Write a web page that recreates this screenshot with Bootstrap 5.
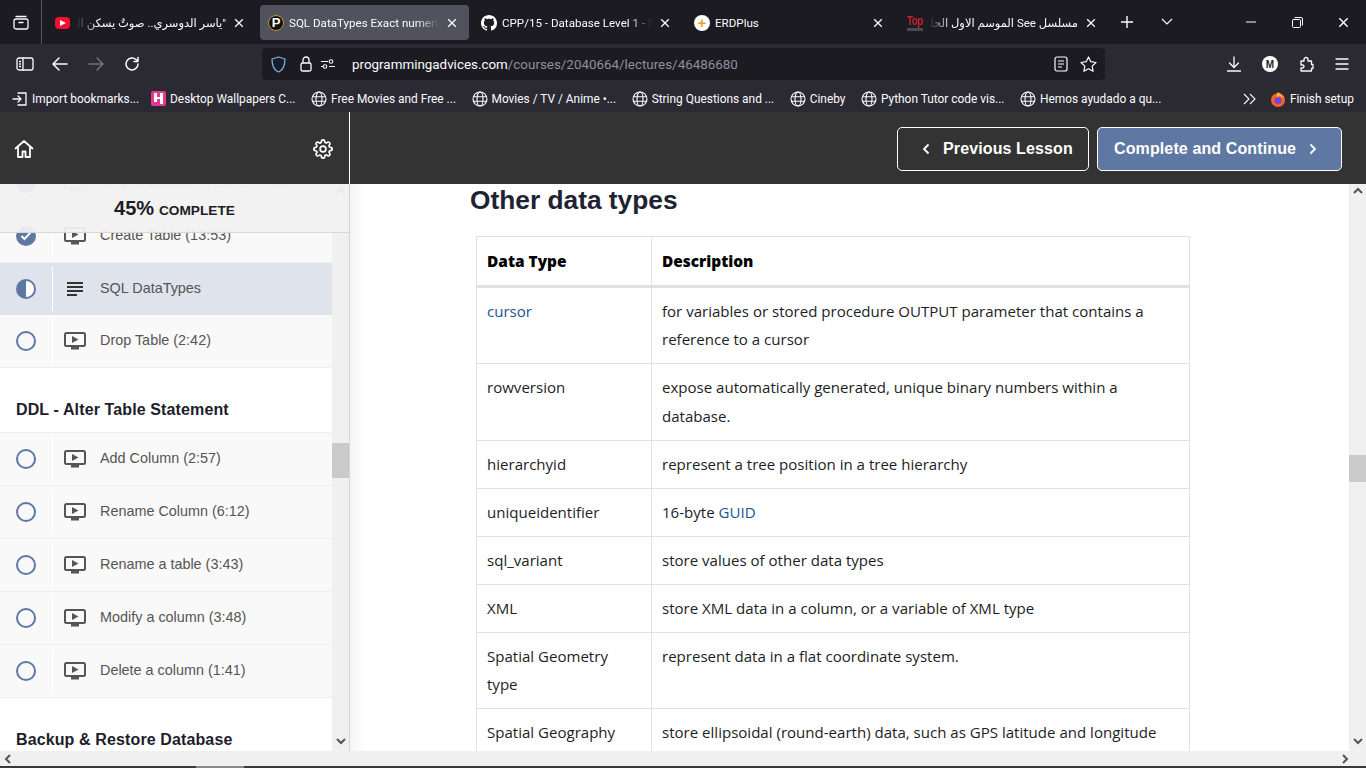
<!DOCTYPE html>
<html lang="en">
<head>
  <meta charset="UTF-8">
  <title>SQL DataTypes</title>
  <link rel="stylesheet" href="https://cdn.jsdelivr.net/npm/bootstrap@5.3.3/dist/css/bootstrap.min.css">
  <style>
    html, body { height: 100%; overflow: hidden; }
    body { font-family: "Liberation Sans", Arial, sans-serif; background: #fff; }
    svg { display: block; flex: none; }
    .ic { fill: none; stroke: currentColor; stroke-linecap: round; stroke-linejoin: round; }
    .shell { height: 768px; }

    /* browser chrome */
    .tabstrip { height: 44px; background: #1c1b22; color: #fbfbfe; font: 11.6px Roboto, "DejaVu Sans", sans-serif; }
    .strip-btn { width: 42px; height: 44px; border-right: 1px solid #55545c; }
    .tabitem { width: 209px; height: 35px; margin-right: 4px; padding: 0 12px 0 8px; border-radius: 4px; }
    .tabitem.on { background: #52525e; }
    .tabs-wrap { padding-left: 5px; padding-top: 1px; }
    .tabname { flex: 1; min-width: 0; margin-left: 5px; white-space: nowrap; overflow: hidden; -webkit-mask-image: linear-gradient(to right, #000 85%, transparent); mask-image: linear-gradient(to right, #000 85%, transparent); }
    .tabname.rtl { direction: rtl; font-size: 11.5px; margin-left: 6px; -webkit-mask-image: linear-gradient(to left, #000 85%, transparent); mask-image: linear-gradient(to left, #000 85%, transparent); }
    .tabname.plain { -webkit-mask-image: none; mask-image: none; }
    .fav { width: 16px; height: 16px; flex: none; }
    .fav-yt { background: #f5102f; border-radius: 4px; width: 15px; height: 12px; }
    .fav-p { background: #111; border: 1px solid #b99a2e; border-radius: 50%; color: #fff; font: 700 13px/14px "Liberation Sans", sans-serif; text-align: center; }
    .fav-erd { background: #fff; border-radius: 50%; color: #f0a020; font: 700 15px/15px "Liberation Sans", sans-serif; text-align: center; }
    .fav-top { color: #c8202c; font: 700 10px/10px "Liberation Sans", sans-serif; text-align: center; letter-spacing: -.6px; }
    .fav-top span { display: block; transform: scaleY(1.25); transform-origin: top; margin-bottom: 3px; }
    .fav-top i { display: block; height: 3px; background: #4a4a50; }
    .tab-plus { margin-left: 8px; }
    .tab-more { margin-left: 27px; }
    .win-btn { width: 46px; }

    .toolbar { height: 40px; background: #2b2a33; color: #fbfbfe; padding-left: 16px; }
    .tool-slot { width: 36px; }
    .urlbar { width: 843px; height: 32px; margin-left: 102px; background: #1c1b22; border-radius: 4px; padding: 0 8px 0 9px; font: 13.4px Roboto, sans-serif; }
    .urlhost { color: #fbfbfe; }
    .urlpath { color: #8f8f9d; }
    .url-lock { margin-left: 14px; }
    .url-tune { margin-left: 9px; }
    .url-text { margin: 1px 0 0 17px; }
    .url-star { margin-left: 12px; }
    .tool-right { gap: 20px; padding-right: 16px; }
    .fav-m { width: 16px; height: 16px; font: 700 10px "Liberation Sans", sans-serif; }

    .bookbar { height: 28px; background: #2b2a33; color: #fbfbfe; font: 11.9px Roboto, sans-serif; padding: 1px 12px 0; white-space: nowrap; }
    .bookitem { margin-right: 15.5px; gap: 4px; }
    .bookitem.first { margin-right: 12px; }
    .book-more { margin-right: 14px; }
    .book-end { gap: 4px; }

    /* course player */
    .player { flex: 1; min-height: 0; }
    .sidepanel { width: 350px; border-right: 1px solid #d4d4d4; }
    .sidehead { height: 72px; background: #333; color: #fff; padding: 2px 16px 0 14px; border-right: 1px solid #fff; margin-right: -1px; }
    .sidebody { flex: 1; min-height: 0; overflow: hidden; position: relative; background: #fff; }
    .progress-box { position: absolute; left: 0; right: 0; top: 0; height: 49px; background: rgba(241, 241, 241, .94); border-bottom: 1px solid #d8d8d8; color: #1d1d25; font-weight: 700; font-size: 13.7px; z-index: 2; }
    .progress-box b { font-size: 20px; margin-right: 1px; }
    .lesson-col { width: 332px; margin-top: -27px; }
    .lesson { height: 53px; padding: 0; background: #f9f9f9; border: 0; border-bottom: 1px solid #eee; color: #555; font-size: 14.4px; }
    .lesson.now { height: 52px; background: #dfe3ec; border-bottom: 0; }
    .lesson.ghost { color: #aaa; }
    .lesson-state { width: 53px; height: 44px; padding-left: 16px; border-right: 1px solid #fff; }
    .lesson-kind { width: 47px; padding-left: 11px; }
    .ring { width: 20px; height: 20px; border: 2px solid #5f77a3; border-radius: 50%; }
    .ring.half { background: linear-gradient(to right, #5f77a3 50%, #fff 50%); }
    .ring.done { background: #5f77a3; }
    .section-name { height: 65px; padding: 28px 16px 0; font-weight: 700; font-size: 16px; letter-spacing: .12px; line-height: 27px; color: #1d1d2b; border-bottom: 1px solid #eee; background: #fff; }
    .sb-track { width: 17px; background: #f0f0f0; color: #555; padding: 3px 0 2px; }
    .sidebody .sb-track { position: absolute; right: 0; top: 0; bottom: 0; }
    .sb-thumb { width: 17px; background: #cacaca; }
    .sb-thumb.left { height: 35px; margin-top: 248px; }
    .sb-thumb.right { height: 27px; margin-top: 260px; }

    .mainpanel { flex: 1; min-width: 0; }
    .mainhead { height: 72px; background: #333; padding: 2px 24px 0 0; gap: 8px; }
    .nav-btn { height: 44px; border: 1px solid #fff; border-radius: 5px; color: #fff; font-weight: 700; font-size: 16px; letter-spacing: .12px; gap: 13px; padding: 0 0 0 16px; }
    .nav-btn:hover { color: #fff; }
    .nav-prev { width: 192px; background: #333; padding-left: 24px; }
    .nav-next { width: 245px; background: #5f77a3; }
    .mainbody { flex: 1; min-height: 0; }
    .lecture { flex: 1; min-width: 0; overflow: hidden; padding-left: 120px; background: linear-gradient(to right, #f4f4f4, #fff 14px); }
    .lecture h2 { font-size: 26.3px; font-weight: 700; line-height: 32px; margin: 0; color: #1f2233; }
    .datatable { width: 714px; margin: 20px 0 0 6px; table-layout: fixed; font: 15.05px/28.5px "Open Sans", "Noto Sans", sans-serif; color: #1d1d25; }
    .datatable th, .datatable td { padding: 9.25px 10px; border-color: #dee2e6; color: #1d1d25; }
    .datatable thead th { font-size: 15.4px; font-weight: 800; color: #000; padding: 10.5px 10px 8.5px; border-bottom: 3px solid #dee2e6; }
    .datatable a { color: #1a5590; text-decoration: none; }
    .col-type { width: 175px; }

    .hbar { height: 15px; background: #f0f0f0; color: #555; padding: 0 17px 0 4px; }
    .footline { height: 2px; background: #3a3a3a; }
    .footline i { display: block; width: 48px; height: 2px; margin-left: 196px; background: #8a8a8a; }
  </style>
</head>
<body>
<svg width="0" height="0" class="position-absolute">
  <symbol id="monitor" viewBox="0 0 22 18"><rect x="1" y="1" width="20" height="13" rx="1.5" fill="none" stroke="currentColor" stroke-width="2"/><path d="M8 4l6.5 3.5L8 11z" fill="currentColor"/><rect x="7" y="15" width="8" height="2.5" fill="currentColor"/></symbol>
  <symbol id="globe" viewBox="0 0 16 16"><g fill="none" stroke="currentColor" stroke-width="1.1"><circle cx="8" cy="8" r="7"/><ellipse cx="8" cy="8" rx="3" ry="7"/><path d="M1.3 5.800h13.400M1.300 10.200h13.400"/></g></symbol>
  <symbol id="closex" viewBox="0 0 10 10"><path d="M1.200 1.200l7.600 7.600M8.800 1.200L1.200 8.800" stroke="currentColor" stroke-width="1.300" fill="none"/></symbol>
  <symbol id="chev-up" viewBox="0 0 10 8"><path d="M1 6l4-4 4 4" fill="none" stroke="currentColor" stroke-width="2"/></symbol>
  <symbol id="chev-down" viewBox="0 0 10 8"><path d="M1 2l4 4 4-4" fill="none" stroke="currentColor" stroke-width="2"/></symbol>
  <symbol id="chev-left" viewBox="0 0 8 10"><path d="M6 1L2 5l4 4" fill="none" stroke="currentColor" stroke-width="2"/></symbol>
  <symbol id="chev-right" viewBox="0 0 8 10"><path d="M2 1l4 4-4 4" fill="none" stroke="currentColor" stroke-width="2"/></symbol>
</svg>

<div class="shell d-flex flex-column">
  <!-- tabs -->
  <div class="tabstrip d-flex align-items-center">
    <div class="strip-btn d-flex align-items-center justify-content-center">
      <svg width="16" height="16" viewBox="0 0 16 16" class="ic" stroke-width="1.300"><rect x="1" y="5" width="14" height="10" rx="2"/><path d="M3 2.500h10M6 8.500h4"/></svg>
    </div>
    <div class="tabs-wrap d-flex align-items-center">
      <div class="tabitem d-flex align-items-center">
        <div class="fav fav-yt d-flex align-items-center justify-content-center"><svg width="6" height="6" viewBox="0 0 6 6"><path d="M0 0l6 3-6 3z" fill="#fff"/></svg></div>
        <div class="tabname rtl" dir="rtl">"ياسر الدوسري.. صوتٌ يسكن الروح والوجدان</div>
        <svg class="ms-2" width="10" height="10"><use href="#closex"/></svg>
      </div>
      <div class="tabitem on d-flex align-items-center">
        <div class="fav fav-p">P</div>
        <div class="tabname">SQL DataTypes Exact numerics and more</div>
        <svg class="ms-2" width="10" height="10"><use href="#closex"/></svg>
      </div>
      <div class="tabitem d-flex align-items-center">
        <svg class="fav" viewBox="0 0 16 16"><path fill="#fff" d="M8 0C3.58 0 0 3.58 0 8c0 3.54 2.29 6.53 5.47 7.59.4.07.55-.17.55-.38 0-.19-.01-.82-.01-1.49-2.01.37-2.53-.49-2.69-.94-.09-.23-.48-.94-.82-1.13-.28-.15-.68-.52-.01-.53.63-.01 1.08.58 1.23.82.72 1.21 1.87.87 2.33.66.07-.52.28-.87.51-1.07-1.78-.2-3.64-.89-3.64-3.95 0-.87.31-1.59.82-2.15-.08-.2-.36-1.02.08-2.12 0 0 .67-.21 2.2.82.64-.18 1.32-.27 2-.27.68 0 1.36.09 2 .27 1.53-1.04 2.2-.82 2.2-.82.44 1.1.16 1.92.08 2.12.51.56.82 1.27.82 2.15 0 3.07-1.87 3.75-3.65 3.95.29.25.54.73.54 1.48 0 1.07-.01 1.93-.01 2.2 0 .21.15.46.55.38A8.012 8.012 0 0 0 16 8c0-4.42-3.58-8-8-8z"/></svg>
        <div class="tabname">CPP/15 - Database Level 1 - SQL Server</div>
        <svg class="ms-2" width="10" height="10"><use href="#closex"/></svg>
      </div>
      <div class="tabitem d-flex align-items-center">
        <div class="fav fav-erd">+</div>
        <div class="tabname plain">ERDPlus</div>
        <svg class="ms-2" width="10" height="10"><use href="#closex"/></svg>
      </div>
      <div class="tabitem d-flex align-items-center">
        <div class="fav fav-top"><span>Top</span><i></i></div>
        <div class="tabname rtl" dir="rtl">مسلسل See الموسم الاول الحلقة الاولى</div>
        <svg class="ms-2" width="10" height="10"><use href="#closex"/></svg>
      </div>
    </div>
    <svg class="tab-plus" width="14" height="14" viewBox="0 0 14 14"><path d="M7 1v12M1 7h12" stroke="#fbfbfe" stroke-width="1.400"/></svg>
    <svg class="tab-more" width="12" height="8" viewBox="0 0 12 8"><path d="M1 1l5 5 5-5" fill="none" stroke="#fbfbfe" stroke-width="1.200"/></svg>
    <div class="ms-auto d-flex align-items-center">
      <div class="win-btn d-flex justify-content-center"><svg width="10" height="2" viewBox="0 0 10 2"><path d="M0 1h10" stroke="#fbfbfe"/></svg></div>
      <div class="win-btn d-flex justify-content-center"><svg width="11" height="11" viewBox="0 0 11 11" class="ic" stroke-width="1"><rect x=".5" y="2.500" width="8" height="8" rx="1"/><path d="M3 .5h6a1.500 1.500 0 0 1 1.500 1.500v6"/></svg></div>
      <div class="win-btn d-flex justify-content-center"><svg width="11" height="11"><use href="#closex"/></svg></div>
    </div>
  </div>

  <!-- toolbar -->
  <div class="toolbar d-flex align-items-center">
    <div class="tool-slot"><svg width="18" height="14" viewBox="0 0 18 14" class="ic" stroke-width="1.300"><rect x="1" y="1" width="16" height="12" rx="2"/><path d="M7 1v12M3.500 4.500h1M3.500 7h1M3.500 9.500h1"/></svg></div>
    <div class="tool-slot"><svg width="16" height="14" viewBox="0 0 16 14" class="ic" stroke-width="1.500"><path d="M15 7H1M7 1L1 7l6 6"/></svg></div>
    <div class="tool-slot text-secondary"><svg width="16" height="14" viewBox="0 0 16 14" class="ic" stroke-width="1.500"><path d="M1 7h14M9 1l6 6-6 6"/></svg></div>
    <div class="tool-slot"><svg width="16" height="16" viewBox="0 0 16 16" class="ic" stroke-width="1.500"><path d="M14 8a6 6 0 1 1-2-4.500L14 5.500M14 1.500v4h-4"/></svg></div>
    <div class="urlbar d-flex align-items-center">
      <svg width="15" height="17" viewBox="0 0 15 17"><path d="M7.500 1L14 3c0 6-1 10.500-6.500 13C2 13.500 1 9 1 3z" fill="none" stroke="#6db5e8" stroke-width="1.300" stroke-linejoin="round"/></svg>
      <svg class="url-lock" width="12" height="16" viewBox="0 0 12 16"><rect x="1" y="7" width="10" height="8" rx="1.500" fill="none" stroke="#fbfbfe" stroke-width="1.300"/><path d="M3 7V4a3 3 0 0 1 6 0v3" fill="none" stroke="#fbfbfe" stroke-width="1.300"/></svg>
      <svg class="url-tune" width="14" height="12" viewBox="0 0 14 12"><g fill="none" stroke="#fbfbfe" stroke-width="1.100"><path d="M0 3.500h7M0 8.500h2M8 8.500h6"/><circle cx="10" cy="3.500" r="1.800"/><circle cx="4" cy="8.500" r="1.800"/></g></svg>
      <span class="url-text"><span class="urlhost">programmingadvices.com</span><span class="urlpath">/courses/2040664/lectures/46486680</span></span>
      <svg class="ms-auto" width="14" height="16" viewBox="0 0 14 16"><g fill="none" stroke="#fbfbfe" stroke-width="1.200"><rect x="1" y="1" width="12" height="14" rx="2"/><path d="M4 5h6M4 8h6M4 11h4"/></g></svg>
      <svg class="url-star" width="17" height="16" viewBox="0 0 17 16"><path d="M8.500 1l2.300 4.700 5.200.8-3.800 3.600.9 5.200-4.600-2.500-4.600 2.500.9-5.200L1 6.500l5.200-.8z" fill="none" stroke="#fbfbfe" stroke-width="1.200" stroke-linejoin="round"/></svg>
    </div>
    <div class="tool-right ms-auto d-flex align-items-center">
      <svg width="16" height="16" viewBox="0 0 16 16" class="ic" stroke-width="1.300"><path d="M8 1v10M3.500 7L8 11.500 12.500 7M1.500 15h13"/></svg>
      <div class="fav-m rounded-circle bg-white text-dark d-flex align-items-center justify-content-center">M</div>
      <svg width="16" height="16" viewBox="0 0 16 16" class="ic" stroke-width="1.300"><path d="M3 5h3V3.500a2 2 0 0 1 4 0V5h3.500v3.500H15v4h-1.500V15H3v-3h1.500a1.500 1.500 0 0 0 0-3H3z"/></svg>
      <svg width="16" height="12" viewBox="0 0 16 12" class="ic" stroke-width="1.300"><path d="M2 1h12M2 6h12M2 11h12"/></svg>
    </div>
  </div>

  <!-- bookmarks -->
  <div class="bookbar d-flex align-items-center">
    <div class="bookitem first d-flex align-items-center"><svg width="16" height="14" viewBox="0 0 16 14" class="ic" stroke-width="1.300"><path d="M6 1h8v12H6M1 7h8M6 4l3 3-3 3"/></svg>Import bookmarks...</div>
    <div class="bookitem d-flex align-items-center"><svg width="15" height="15" viewBox="0 0 15 15"><rect width="15" height="15" rx="2" fill="#e4398f"/><path d="M3 2h3v9H3zM9 2h3v11H9zM6 6h3v2H6z" fill="#fff"/></svg>Desktop Wallpapers C...</div>
    <div class="bookitem d-flex align-items-center"><svg width="16" height="16"><use href="#globe"/></svg>Free Movies and Free ...</div>
    <div class="bookitem d-flex align-items-center"><svg width="16" height="16"><use href="#globe"/></svg>Movies / TV / Anime •...</div>
    <div class="bookitem d-flex align-items-center"><svg width="16" height="16"><use href="#globe"/></svg>String Questions and ...</div>
    <div class="bookitem d-flex align-items-center"><svg width="16" height="16"><use href="#globe"/></svg>Cineby</div>
    <div class="bookitem d-flex align-items-center"><svg width="16" height="16"><use href="#globe"/></svg>Python Tutor code vis...</div>
    <div class="bookitem d-flex align-items-center"><svg width="16" height="16"><use href="#globe"/></svg>Hemos ayudado a qu...</div>
    <svg class="book-more ms-auto" width="13" height="12" viewBox="0 0 13 12"><path d="M1 1l5 5-5 5M7 1l5 5-5 5" fill="none" stroke="#fbfbfe" stroke-width="1.100"/></svg>
    <div class="book-end d-flex align-items-center">
      <svg width="16" height="16" viewBox="0 0 16 16"><circle cx="8" cy="9" r="7" fill="#f5641e"/><path d="M8 1c2 2 5 3 6 6-3-2-6-2-8-1z" fill="#ffb52e"/><circle cx="8" cy="9.500" r="3.500" fill="#7542e5"/></svg>
      Finish setup
    </div>
  </div>

  <!-- course player -->
  <div class="player d-flex">
    <div class="sidepanel d-flex flex-column">
      <div class="sidehead d-flex align-items-center justify-content-between">
        <svg width="20" height="20" viewBox="0 0 20 20" class="ic" stroke-width="1.800"><path d="M1.500 9.500L10 2l8.500 7.500M4 8v10h4.500v-5.500h3V18H16V8"/></svg>
        <svg width="20" height="20" viewBox="0 0 24 24" class="ic" stroke-width="2"><circle cx="12" cy="12" r="3.500"/><path d="M19.400 15a1.650 1.650 0 0 0 .33 1.820l.06.06a2 2 0 0 1 0 2.830 2 2 0 0 1-2.830 0l-.06-.06a1.650 1.650 0 0 0-1.820-.33 1.650 1.650 0 0 0-1 1.510V21a2 2 0 0 1-2 2 2 2 0 0 1-2-2v-.09A1.650 1.650 0 0 0 9 19.400a1.650 1.650 0 0 0-1.820.33l-.06.06a2 2 0 0 1-2.830 0 2 2 0 0 1 0-2.830l.06-.06a1.650 1.650 0 0 0 .33-1.820 1.650 1.650 0 0 0-1.510-1H3a2 2 0 0 1-2-2 2 2 0 0 1 2-2h.09A1.650 1.650 0 0 0 4.600 9a1.650 1.650 0 0 0-.33-1.820l-.06-.06a2 2 0 0 1 0-2.830 2 2 0 0 1 2.830 0l.06.06a1.650 1.650 0 0 0 1.820.33H9a1.650 1.650 0 0 0 1-1.510V3a2 2 0 0 1 2-2 2 2 0 0 1 2 2v.09a1.650 1.650 0 0 0 1 1.510 1.650 1.650 0 0 0 1.820-.33l.06-.06a2 2 0 0 1 2.830 0 2 2 0 0 1 0 2.830l-.06.06a1.650 1.650 0 0 0-.33 1.820V9a1.650 1.650 0 0 0 1.510 1H21a2 2 0 0 1 2 2 2 2 0 0 1-2 2h-.09a1.650 1.650 0 0 0-1.510 1z"/></svg>
      </div>
      <div class="sidebody">
        <div class="progress-box d-flex align-items-center justify-content-center"><div><b>45%</b> COMPLETE</div></div>
        <div class="lesson-col list-group list-group-flush">
          <div class="lesson ghost list-group-item d-flex align-items-center">
            <div class="lesson-state d-flex align-items-center"><div class="ring done"></div></div>
            <div class="lesson-kind"><svg width="22" height="18"><use href="#monitor"/></svg></div>
            <span>Drop Database If Exists (8:05)</span>
          </div>
          <div class="lesson list-group-item d-flex align-items-center">
            <div class="lesson-state d-flex align-items-center"><div class="ring done d-flex align-items-center justify-content-center"><svg width="12" height="10" viewBox="0 0 12 10"><path d="M1.500 5l3 3 6-6.500" fill="none" stroke="#fff" stroke-width="2"/></svg></div></div>
            <div class="lesson-kind"><svg width="22" height="18"><use href="#monitor"/></svg></div>
            <span>Create Table (13:53)</span>
          </div>
          <div class="lesson now list-group-item d-flex align-items-center">
            <div class="lesson-state d-flex align-items-center"><div class="ring half"></div></div>
            <div class="lesson-kind"><svg width="22" height="16" viewBox="0 0 22 16"><path d="M3 2h16M3 6h16M3 10h16M3 14h10" stroke="#333" stroke-width="2"/></svg></div>
            <span>SQL DataTypes</span>
          </div>
          <div class="lesson list-group-item d-flex align-items-center">
            <div class="lesson-state d-flex align-items-center"><div class="ring"></div></div>
            <div class="lesson-kind"><svg width="22" height="18"><use href="#monitor"/></svg></div>
            <span>Drop Table (2:42)</span>
          </div>
          <div class="section-name">DDL - Alter Table Statement</div>
          <div class="lesson list-group-item d-flex align-items-center">
            <div class="lesson-state d-flex align-items-center"><div class="ring"></div></div>
            <div class="lesson-kind"><svg width="22" height="18"><use href="#monitor"/></svg></div>
            <span>Add Column (2:57)</span>
          </div>
          <div class="lesson list-group-item d-flex align-items-center">
            <div class="lesson-state d-flex align-items-center"><div class="ring"></div></div>
            <div class="lesson-kind"><svg width="22" height="18"><use href="#monitor"/></svg></div>
            <span>Rename Column (6:12)</span>
          </div>
          <div class="lesson list-group-item d-flex align-items-center">
            <div class="lesson-state d-flex align-items-center"><div class="ring"></div></div>
            <div class="lesson-kind"><svg width="22" height="18"><use href="#monitor"/></svg></div>
            <span>Rename a table (3:43)</span>
          </div>
          <div class="lesson list-group-item d-flex align-items-center">
            <div class="lesson-state d-flex align-items-center"><div class="ring"></div></div>
            <div class="lesson-kind"><svg width="22" height="18"><use href="#monitor"/></svg></div>
            <span>Modify a column (3:48)</span>
          </div>
          <div class="lesson list-group-item d-flex align-items-center">
            <div class="lesson-state d-flex align-items-center"><div class="ring"></div></div>
            <div class="lesson-kind"><svg width="22" height="18"><use href="#monitor"/></svg></div>
            <span>Delete a column (1:41)</span>
          </div>
          <div class="section-name">Backup &amp; Restore Database</div>
        </div>
        <div class="sb-track d-flex flex-column align-items-center">
          <svg width="10" height="8"><use href="#chev-up"/></svg>
          <div class="sb-thumb left"></div>
          <svg class="mt-auto mb-1" width="10" height="8"><use href="#chev-down"/></svg>
        </div>
      </div>
    </div>

    <div class="mainpanel d-flex flex-column">
      <div class="mainhead d-flex align-items-center justify-content-end">
        <a class="nav-btn nav-prev btn d-flex align-items-center" href="#">
          <svg width="8" height="12" viewBox="0 0 8 12"><path d="M6.500 1.500L2 6l4.500 4.500" fill="none" stroke="#fff" stroke-width="1.800"/></svg>
          Previous Lesson
        </a>
        <a class="nav-btn nav-next btn d-flex align-items-center" href="#">
          Complete and Continue
          <svg width="8" height="12" viewBox="0 0 8 12"><path d="M1.500 1.500L6 6l-4.500 4.500" fill="none" stroke="#fff" stroke-width="1.800"/></svg>
        </a>
      </div>
      <div class="mainbody d-flex">
        <div class="lecture">
          <h2>Other data types</h2>
          <table class="datatable table table-bordered mb-0">
            <colgroup><col class="col-type"><col></colgroup>
            <thead>
              <tr><th>Data Type</th><th>Description</th></tr>
            </thead>
            <tbody>
              <tr><td><a href="#">cursor</a></td><td>for variables or stored procedure OUTPUT parameter that contains a reference to a cursor</td></tr>
              <tr><td>rowversion</td><td>expose automatically generated, unique binary numbers within a database.</td></tr>
              <tr><td>hierarchyid</td><td>represent a tree position in a tree hierarchy</td></tr>
              <tr><td>uniqueidentifier</td><td>16-byte <a href="#">GUID</a></td></tr>
              <tr><td>sql_variant</td><td>store values of other data types</td></tr>
              <tr><td>XML</td><td>store XML data in a column, or a variable of XML type</td></tr>
              <tr><td>Spatial Geometry type</td><td>represent data in a flat coordinate system.</td></tr>
              <tr><td>Spatial Geography type</td><td>store ellipsoidal (round-earth) data, such as GPS latitude and longitude coordinates.</td></tr>
            </tbody>
          </table>
        </div>
        <div class="sb-track d-flex flex-column align-items-center">
          <svg width="10" height="8"><use href="#chev-up"/></svg>
          <div class="sb-thumb right"></div>
          <svg class="mt-auto mb-1" width="10" height="8"><use href="#chev-down"/></svg>
        </div>
      </div>
    </div>
  </div>

  <div class="hbar d-flex align-items-center justify-content-between">
    <svg width="8" height="10"><use href="#chev-left"/></svg>
    <svg width="8" height="10"><use href="#chev-right"/></svg>
  </div>
  <div class="footline"><i></i></div>
</div>

<script src="https://cdn.jsdelivr.net/npm/bootstrap@5.3.3/dist/js/bootstrap.bundle.min.js"></script>
</body>
</html>
